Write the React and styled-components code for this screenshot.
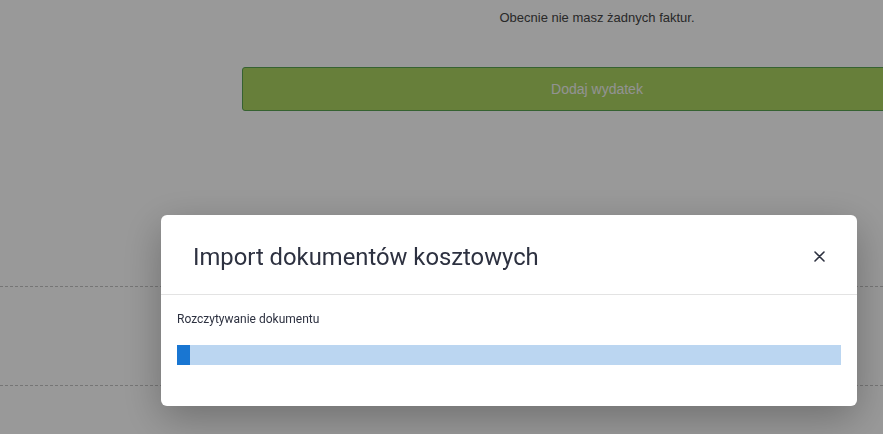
import React from "react"
import styled, { createGlobalStyle } from "styled-components"

const GlobalStyle = createGlobalStyle`
  html, body {
    margin: 0;
    padding: 0;
    background: #ffffff;
    height: 100%;
    overflow: hidden;
  }
  #root {
    height: 100%;
  }
`

const Page = styled.div`
  height: 434px;
  width: 883px;
  overflow: hidden;
  font-family: "Liberation Sans", Arial, sans-serif;
  color: #454545;
`

const Content = styled.div`
  width: 710px;
  margin-left: 242px;
  display: flex;
  flex-direction: column;
`

const EmptyText = styled.p`
  margin: 10px 0 0;
  font-size: 13px;
  line-height: 16px;
  text-align: center;
`

const AddButton = styled.button`
  margin-top: 41px;
  height: 44px;
  width: 100%;
  border: 1px solid #5aa352;
  border-radius: 3px;
  background: #acd461;
  color: #f4f4f4;
  font-family: "Liberation Sans", Arial, sans-serif;
  font-size: 14px;
`

const Divider = styled.div`
  height: 0;
  border-top: 1px dashed #c4c4c4;
  margin-top: ${p => p.$gap}px;
`

const Overlay = styled.div`
  position: fixed;
  inset: 0;
  background: rgba(0, 0, 0, 0.4);
  padding: 215px 0 0 161px;
`

const Modal = styled.div`
  width: 696px;
  height: 191px;
  background: #ffffff;
  border-radius: 6px;
  box-shadow: 0 12px 40px rgba(0, 0, 0, 0.28);
  font-family: Roboto, "Liberation Sans", sans-serif;
  display: flex;
  flex-direction: column;
`

const Header = styled.div`
  height: 80px;
  border-bottom: 1px solid #e3e3e3;
  display: flex;
  align-items: center;
  justify-content: space-between;
  padding: 4px 30px 0 32px;
  box-sizing: border-box;
`

const Title = styled.h2`
  margin: 0;
  font-weight: 400;
  font-size: 23.8px;
  color: #2d3140;
`

const CloseButton = styled.button`
  border: 0;
  background: none;
  padding: 0;
  width: 16px;
  height: 16px;
  display: flex;
  align-items: center;
  justify-content: center;
`

const Body = styled.div`
  padding: 16px 16px 0;
`

const Label = styled.div`
  font-size: 12px;
  line-height: 16px;
  color: #2d3140;
`

const Track = styled.div`
  margin-top: 18px;
  height: 20px;
  background: #bbd6f1;
`

const Fill = styled.div`
  height: 100%;
  background: #1976d2;
`

export default function App() {
  const progress = 2
  return (
    <>
      <GlobalStyle />
      <Page>
        <Content>
          <EmptyText>Obecnie nie masz żadnych faktur.</EmptyText>
          <AddButton>Dodaj wydatek</AddButton>
        </Content>
        <Divider $gap={175} />
        <Divider $gap={98} />
      </Page>
      <Overlay>
        <Modal>
          <Header>
            <Title>Import dokumentów kosztowych</Title>
            <CloseButton aria-label="Zamknij">
              <svg width="11" height="11" viewBox="0 0 11 11">
                <path d="M1 1L10 10M10 1L1 10" stroke="#2d3140" strokeWidth="1.6" strokeLinecap="round" />
              </svg>
            </CloseButton>
          </Header>
          <Body>
            <Label>Rozczytywanie dokumentu</Label>
            <Track>
              <Fill style={{ width: `${progress}%` }} />
            </Track>
          </Body>
        </Modal>
      </Overlay>
    </>
  )
}
